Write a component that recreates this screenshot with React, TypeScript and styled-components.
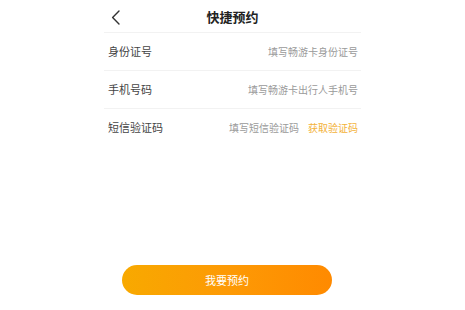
import { useState } from "react";
import styled, { createGlobalStyle } from "styled-components";

const GlobalStyle = createGlobalStyle`
  html, body {
    margin: 0;
    padding: 0;
    background: #ffffff;
  }
  body {
    font-family: "Noto Sans CJK SC", "Noto Sans", sans-serif;
  }
`;

const Root = styled.div`
  width: 465px;
  height: 310px;
  display: flex;
  flex-direction: column;
  box-sizing: border-box;
  padding-bottom: 15px;
`;

const Panel = styled.div`
  width: 257px;
  margin: 0 auto;
  display: flex;
  flex-direction: column;
`;

const Header = styled.div`
  position: relative;
  height: 32px;
  display: flex;
  align-items: center;
  justify-content: center;
  border-bottom: 1px solid #f2f2f2;
`;

const BackButton = styled.button`
  position: absolute;
  left: 5px;
  top: 9px;
  width: 12px;
  height: 16px;
  padding: 0;
  border: none;
  background: transparent;
  display: flex;
  align-items: center;
  justify-content: center;
`;

const Title = styled.h1`
  margin: 0;
  font-size: 13px;
  font-weight: 700;
  color: #222222;
  line-height: 1;
`;

const Row = styled.div<{ $last?: boolean }>`
  height: 36px;
  display: flex;
  align-items: center;
  padding: 0 3px 1px 4px;
  border-bottom: ${(p) => (p.$last ? "none" : "1px solid #f2f2f2")};
`;

const Label = styled.label`
  width: 70px;
  font-size: 11px;
  color: #444444;
  white-space: nowrap;
`;

const Input = styled.input`
  flex: 1;
  min-width: 0;
  border: none;
  outline: none;
  background: transparent;
  text-align: right;
  font-family: inherit;
  font-size: 10px;
  color: #333333;
  padding: 0;
  &::placeholder {
    color: #9a9a9a;
  }
`;

const CodeLink = styled.span`
  margin-left: 9px;
  font-size: 10px;
  color: #f3b23a;
  white-space: nowrap;
`;

const Footer = styled.div`
  margin-top: auto;
  display: flex;
  justify-content: center;
  padding-right: 11px;
`;

const SubmitButton = styled.button`
  width: 210px;
  height: 30px;
  border: none;
  border-radius: 15px;
  background: linear-gradient(90deg, #f8a900 0%, #fd9a05 50%, #ff8a00 100%);
  color: #ffffff;
  font-family: inherit;
  font-size: 11px;
  cursor: pointer;
`;

const App = () => {
  const [idCard, setIdCard] = useState("");
  const [phone, setPhone] = useState("");
  const [code, setCode] = useState("");

  return (
    <Root>
      <GlobalStyle />
      <Panel>
        <Header>
          <BackButton aria-label="返回">
            <svg width="9" height="15" viewBox="0 0 9 15" fill="none">
              <path
                d="M8 1L1.6 7.5L8 14"
                stroke="#333333"
                strokeWidth="1.4"
                strokeLinecap="round"
                strokeLinejoin="round"
              />
            </svg>
          </BackButton>
          <Title>快捷预约</Title>
        </Header>
        <Row>
          <Label htmlFor="idCard">身份证号</Label>
          <Input
            id="idCard"
            value={idCard}
            onChange={(e) => setIdCard(e.target.value)}
            placeholder="填写畅游卡身份证号"
          />
        </Row>
        <Row>
          <Label htmlFor="phone">手机号码</Label>
          <Input
            id="phone"
            value={phone}
            onChange={(e) => setPhone(e.target.value)}
            placeholder="填写畅游卡出行人手机号"
          />
        </Row>
        <Row $last>
          <Label htmlFor="code">短信验证码</Label>
          <Input
            id="code"
            value={code}
            onChange={(e) => setCode(e.target.value)}
            placeholder="填写短信验证码"
          />
          <CodeLink>获取验证码</CodeLink>
        </Row>
      </Panel>
      <Footer>
        <SubmitButton>我要预约</SubmitButton>
      </Footer>
    </Root>
  );
};

export default App;
